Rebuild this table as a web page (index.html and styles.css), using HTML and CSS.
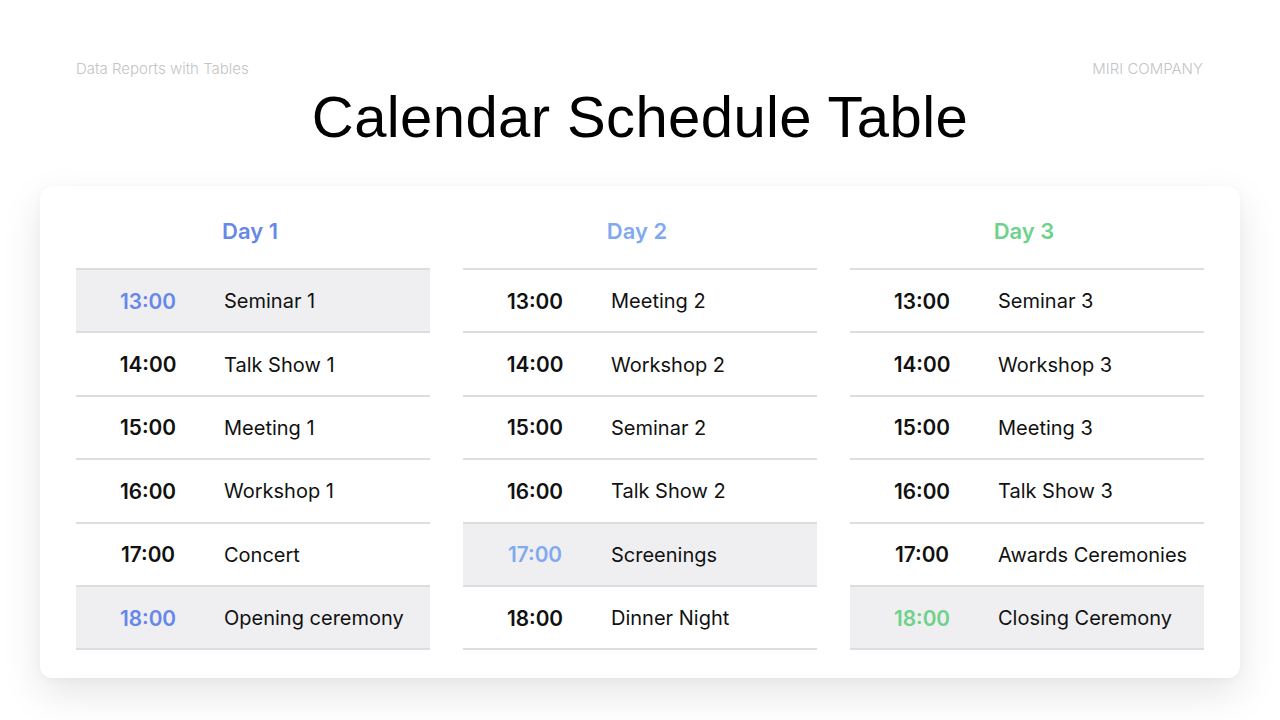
FILE: index.html
```html
<!DOCTYPE html>
<html>
<head>
<meta charset="utf-8">
<link rel="stylesheet" href="styles.css">
</head>
<body>
<div class="page">
  <header class="top">
    <span class="meta">Data Reports with Tables</span>
    <span class="meta">MIRI COMPANY</span>
  </header>
  <h1 class="title">Calendar Schedule Table</h1>
  <section class="card">
    <div class="day">
      <h2 class="day-title d1">Day 1</h2>
      <div class="row hl"><span class="time d1">13:00</span><span class="event">Seminar 1</span></div>
      <div class="row"><span class="time">14:00</span><span class="event">Talk Show 1</span></div>
      <div class="row"><span class="time">15:00</span><span class="event">Meeting 1</span></div>
      <div class="row"><span class="time">16:00</span><span class="event">Workshop 1</span></div>
      <div class="row"><span class="time">17:00</span><span class="event">Concert</span></div>
      <div class="row hl"><span class="time d1">18:00</span><span class="event">Opening ceremony</span></div>
    </div>
    <div class="day">
      <h2 class="day-title d2">Day 2</h2>
      <div class="row"><span class="time">13:00</span><span class="event">Meeting 2</span></div>
      <div class="row"><span class="time">14:00</span><span class="event">Workshop 2</span></div>
      <div class="row"><span class="time">15:00</span><span class="event">Seminar 2</span></div>
      <div class="row"><span class="time">16:00</span><span class="event">Talk Show 2</span></div>
      <div class="row hl"><span class="time d2">17:00</span><span class="event">Screenings</span></div>
      <div class="row"><span class="time">18:00</span><span class="event">Dinner Night</span></div>
    </div>
    <div class="day">
      <h2 class="day-title d3">Day 3</h2>
      <div class="row"><span class="time">13:00</span><span class="event">Seminar 3</span></div>
      <div class="row"><span class="time">14:00</span><span class="event">Workshop 3</span></div>
      <div class="row"><span class="time">15:00</span><span class="event">Meeting 3</span></div>
      <div class="row"><span class="time">16:00</span><span class="event">Talk Show 3</span></div>
      <div class="row"><span class="time">17:00</span><span class="event">Awards Ceremonies</span></div>
      <div class="row hl"><span class="time d3">18:00</span><span class="event">Closing Ceremony</span></div>
    </div>
  </section>
</div>
</body>
</html>
```
FILE: styles.css
```css
* { box-sizing: border-box; }
html, body { margin: 0; padding: 0; background: #ffffff; }
body { font-family: Inter, "Liberation Sans", sans-serif; color: #111; }
.page { width: 1280px; height: 720px; padding: 59px 40px 0; overflow: hidden; }
.top { display: flex; justify-content: space-between; padding: 0 37px 0 36px; }
.meta { font-size: 15px; color: #c4c4c4; line-height: 20px; font-weight: 300; }
.title { margin: 7px 0 0; text-align: center; font-family: "Liberation Sans", Inter, sans-serif; font-weight: 400; font-size: 58px; line-height: 62px; color: #000; letter-spacing: 0.4px; }
.card { margin-top: 38px; height: 492px; background: #fff; border-radius: 12px; box-shadow: 0 16px 40px rgba(0,0,0,0.10), 0 2px 8px rgba(0,0,0,0.03); padding: 0 36px; display: grid; grid-template-columns: repeat(3, 354px); column-gap: 33px; }
.day-title { margin: 0; height: 82px; display: flex; align-items: center; justify-content: center; font-size: 22px; font-weight: 600; padding: 8px 6px 0 0; }
.d1 { color: #6787ea; }
.d2 { color: #80aaf0; }
.d3 { color: #6ed28a; }
.row { display: flex; align-items: center; height: 63.4px; border-top: 2px solid #dddddd; padding-top: 1px; }
.row:last-child { border-bottom: 2px solid #dddddd; height: 65.4px; }
.row.hl { background: #efeff1; }
.time { width: 144px; text-align: center; font-size: 20.8px; font-weight: 600; margin-right: 4px; color: #111; }
.time.d1 { color: #6787ea; }
.time.d2 { color: #80aaf0; }
.time.d3 { color: #6ed28a; }
.event { font-size: 20px; font-weight: 400; color: #111; }
```
